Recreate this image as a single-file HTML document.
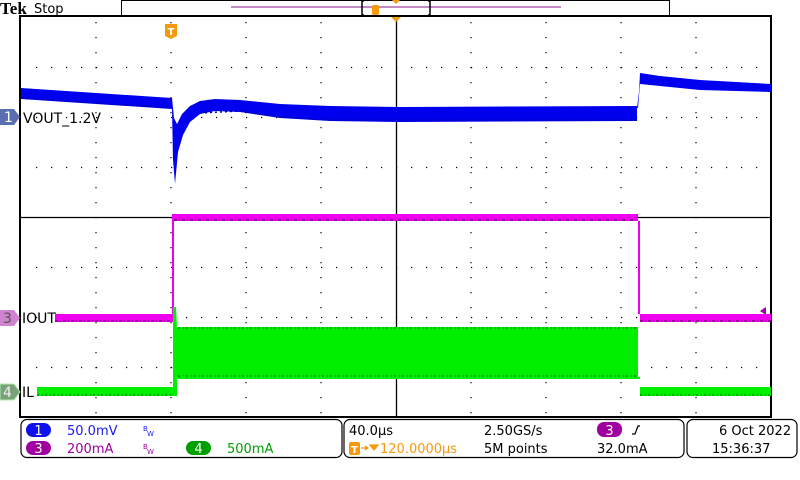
<!DOCTYPE html>
<html><head><meta charset="utf-8"><style>
html,body{margin:0;padding:0;background:#fff;width:800px;height:480px;overflow:hidden}
svg{display:block}
text{font-family:"DejaVu Sans","Liberation Sans",sans-serif}
</style></head><body>
<svg width="800" height="480" viewBox="0 0 800 480" xmlns="http://www.w3.org/2000/svg">
<!-- header -->
<text x="0" y="14" font-weight="bold" font-size="17" fill="#000" style="font-family:'Liberation Serif',serif">Tek</text>
<text x="34" y="13" font-size="13" fill="#000">Stop</text>
<rect x="121.5" y="0.5" width="548" height="15" fill="#fff" stroke="#000"/>
<line x1="231" y1="7" x2="561" y2="7" stroke="#8a1a8a" stroke-width="1"/>
<path d="M364 1h-2v14h2M428 1h2v14h-2" fill="none" stroke="#000" stroke-width="1.5"/>
<rect x="372" y="5" width="7" height="10" rx="2" fill="#f59a0f"/>
<path d="M392 0h8l-4 4z" fill="#f59a0f"/>
<line x1="20" y1="16" x2="671" y2="16" stroke="#000" stroke-width="2"/>
<!-- graticule -->
<rect x="20" y="16" width="751" height="401" fill="none" stroke="#000" stroke-width="2"/>
<g stroke="#000" stroke-width="1.2" stroke-dasharray="1.2 13.8">
<line x1="96" y1="22" x2="96" y2="417"/><line x1="171" y1="22" x2="171" y2="417"/><line x1="246" y1="22" x2="246" y2="417"/><line x1="321" y1="22" x2="321" y2="417"/><line x1="471" y1="22" x2="471" y2="417"/><line x1="546" y1="22" x2="546" y2="417"/><line x1="621" y1="22" x2="621" y2="417"/><line x1="696" y1="22" x2="696" y2="417"/>
</g>
<g stroke="#000" stroke-width="1.2" stroke-dasharray="1.2 13.8">
<line x1="36" y1="67.5" x2="771" y2="67.5"/><line x1="36" y1="117.5" x2="771" y2="117.5"/><line x1="36" y1="167.5" x2="771" y2="167.5"/><line x1="36" y1="267.5" x2="771" y2="267.5"/><line x1="36" y1="317.5" x2="771" y2="317.5"/><line x1="36" y1="367.5" x2="771" y2="367.5"/>
</g>
<line x1="396.5" y1="17" x2="396.5" y2="417" stroke="#000" stroke-width="1.3"/>
<line x1="21" y1="217.5" x2="771" y2="217.5" stroke="#000" stroke-width="1.3"/>
<path d="M391 17h10l-5 5z" fill="#f59a0f"/>
<!-- trigger T marker -->
<path d="M165 24h12v12l-6 3l-6-3z" fill="#f59a0f"/>
<text x="171" y="35" font-size="10" font-weight="bold" fill="#fff" text-anchor="middle">T</text>
<!-- blue trace -->
<path d="M21 88 L172 98 L174 118 L177 124 L182 114 L190 106 L200 101 L215 99 L240 100 L280 104 L330 106 L400 107 L637 106 L637 121 L400 122 L330 121 L280 118 L240 112 L215 111 L200 114 L190 122 L183 135 L178 152 L175 184 L173 160 L172 109 L21 99Z" fill="#0000ee"/>
<path d="M637 108 L639 92 L640 73 L660 76 L700 80 L771 84 L771 92 L700 90 L660 86 L640 84 L638 108Z" fill="#0000ee"/>
<path d="M21 98 L172 108 M200 113 L240 111 L280 117 L330 120 L637 120" stroke="#0000aa" stroke-width="1.5" fill="none" stroke-dasharray="2 3"/>
<!-- magenta trace -->
<path d="M55 314 H172 V214 H638 V314 H771 V322 H640 V221 H174 V322 H55Z" fill="#ee00ee"/>
<path d="M55 321 H172 M174 220 H638 M640 321 H771" stroke="#a000a0" stroke-width="2" stroke-dasharray="3 2 1 2"/>
<path d="M760 311 l6 -4 v8z" fill="#a000a0"/>
<!-- green trace -->
<path d="M37 387 H173 V307 L176 307 L177 327 H638 V377 L640 377 V387 H771 V396 H640 V379 H177 V396 H37Z" fill="#00ee00"/>
<path d="M37 395 H173 M178 376 H638 M640 395 H771 M178 328 H638" stroke="#00a000" stroke-width="2" stroke-dasharray="2 3 1 2"/>
<!-- channel markers -->
<path d="M0 109h14l6 8l-6 8h-14z" fill="#5a6fb0"/>
<text x="4" y="122" font-size="14" fill="#fff">1</text>
<text x="23" y="123" font-size="14" fill="#000">VOUT_1.2V</text>
<path d="M0 310h14l6 8l-6 8h-14z" fill="#d084d0"/>
<text x="3" y="323" font-size="14" fill="#555">3</text>
<text x="22" y="323" font-size="14" fill="#000">IOUT</text>
<path d="M0 384h14l6 8l-6 8h-14z" fill="#7aa07a" stroke="#aaeeaa"/>
<text x="3" y="397" font-size="14" fill="#eee">4</text>
<text x="22" y="397" font-size="14" fill="#000">IL</text>
<!-- bottom panels -->
<rect x="21" y="419.5" width="321" height="38" rx="6" fill="#fff" stroke="#000" stroke-width="1.2"/>
<rect x="344" y="419.5" width="340" height="38" rx="6" fill="#fff" stroke="#000" stroke-width="1.2"/>
<rect x="687" y="419.5" width="110" height="38" rx="6" fill="#fff" stroke="#000" stroke-width="1.2"/>
<rect x="26" y="423" width="25" height="14" rx="7" fill="#1010ee"/>
<text x="38.5" y="435" font-size="13" fill="#fff" text-anchor="middle">1</text>
<text x="67" y="435" font-size="13" fill="#1a1aee">50.0mV</text>
<text x="143" y="431" font-size="7" fill="#1a1aee">B</text><text x="147" y="436" font-size="7" fill="#1a1aee">W</text>
<rect x="26" y="441" width="25" height="14" rx="7" fill="#a000a0"/>
<text x="38.5" y="453" font-size="13" fill="#fff" text-anchor="middle">3</text>
<text x="67" y="453" font-size="13" fill="#a000a0">200mA</text>
<text x="143" y="449" font-size="7" fill="#a000a0">B</text><text x="147" y="454" font-size="7" fill="#a000a0">W</text>
<rect x="186" y="441" width="25" height="14" rx="7" fill="#00a000"/>
<text x="198.5" y="453" font-size="13" fill="#fff" text-anchor="middle">4</text>
<text x="227" y="453" font-size="13" fill="#00a000">500mA</text>
<text x="349" y="435" font-size="13" fill="#000">40.0µs</text>
<rect x="349" y="442" width="11" height="13" rx="2" fill="#f59a0f"/>
<text x="354.5" y="453" font-size="10" font-weight="bold" fill="#fff" text-anchor="middle">T</text>
<path d="M361 448h6M365 446l3 2l-3 2M370 445h8l-4 5z" stroke="#f59a0f" stroke-width="1.3" fill="#f59a0f"/>
<text x="380" y="453" font-size="13" fill="#f59a0f">120.0000µs</text>
<text x="484" y="435" font-size="13" fill="#000">2.50GS/s</text>
<text x="484" y="453" font-size="13" fill="#000">5M points</text>
<rect x="597" y="422" width="25" height="15" rx="7" fill="#a000a0"/>
<text x="609.5" y="435" font-size="13" fill="#fff" text-anchor="middle">3</text>
<path d="M632 434h3l3-8h2" stroke="#000" fill="none" stroke-width="1.2"/>
<text x="597" y="453" font-size="13" fill="#000">32.0mA</text>
<text x="719" y="435" font-size="13" fill="#000">6 Oct  2022</text>
<text x="712" y="453" font-size="13" fill="#000">15:36:37</text>
</svg>
</body></html>
